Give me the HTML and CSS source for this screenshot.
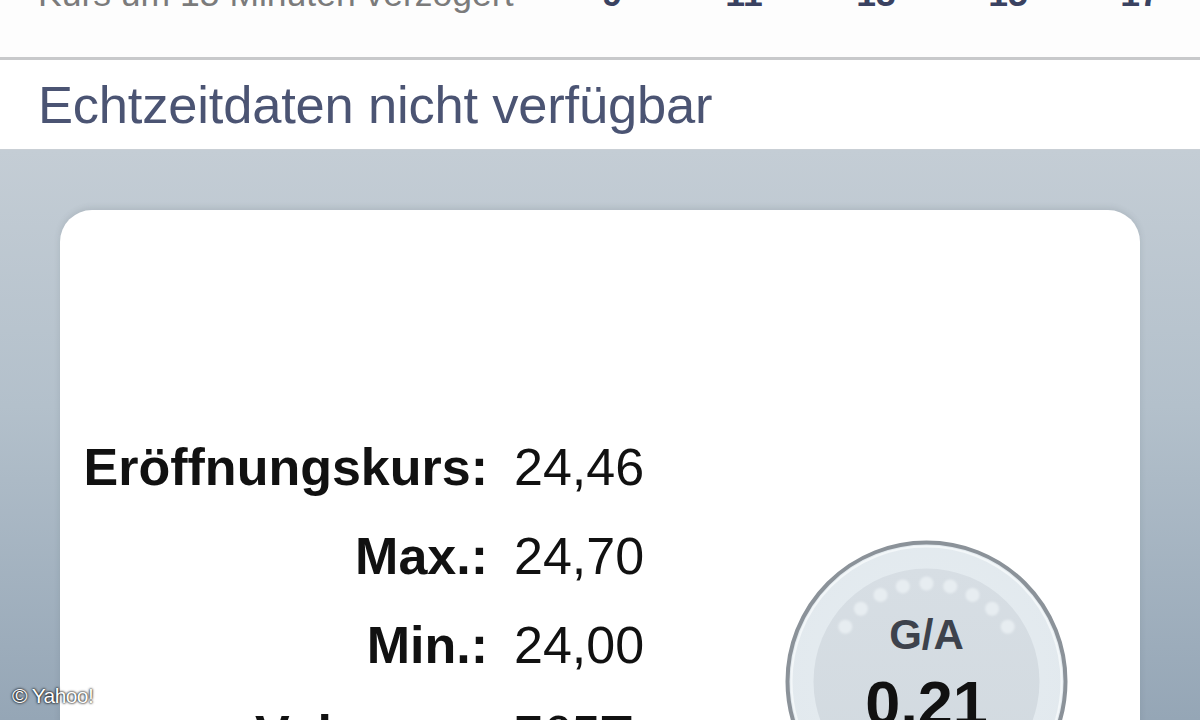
FILE: index.html
```html
<!DOCTYPE html>
<html lang="de">
<head>
<meta charset="utf-8">
<title>Kurs</title>
<link rel="stylesheet" href="styles.css">
</head>
<body>
<div class="screen">
  <div class="status">
    <div class="status-row">
      <span class="status-label">Kurs um 15 Minuten verzögert</span>
      <div class="axis">
        <span>9</span><span>11</span><span>13</span><span>15</span><span>17</span>
      </div>
    </div>
  </div>
  <div class="sep"></div>
  <div class="notice">Echtzeitdaten nicht verfügbar</div>
  <div class="panel">
    <div class="card">
      <div class="stats">
        <span class="label">Eröffnungskurs:</span><span class="value">24,46</span>
        <span class="label">Max.:</span><span class="value">24,70</span>
        <span class="label">Min.:</span><span class="value">24,00</span>
        <span class="label">Volumen:</span><span class="value">765T</span>
      </div>
      <div class="gauge">
        <svg class="gauge-bg" viewBox="0 0 283 283" width="283" height="283">
          <defs>
            <radialGradient id="ring" cx="50%" cy="45%" r="55%">
              <stop offset="0" stop-color="#e6edf1"/>
              <stop offset="1" stop-color="#e2e9ee"/>
            </radialGradient>
            <linearGradient id="inner" x1="0" y1="0" x2="0" y2="1">
              <stop offset="0" stop-color="#d7dee4"/>
              <stop offset="1" stop-color="#d1d9df"/>
            </linearGradient>
            <filter id="soft"><feGaussianBlur stdDeviation="1.2"/></filter>
          </defs>
          <circle cx="141.5" cy="141.5" r="139" fill="url(#ring)" stroke="#8b9299" stroke-width="4"/>
          <circle cx="141.5" cy="141.5" r="135" fill="none" stroke="#f3f7f9" stroke-width="2"/>
          <circle cx="141.5" cy="141.5" r="113" fill="url(#inner)"/>
          <g fill="#e7edf1" filter="url(#soft)">
            <circle cx="60.3" cy="86.7" r="7"/>
            <circle cx="75.9" cy="68.7" r="7"/>
            <circle cx="95.5" cy="55" r="7"/>
            <circle cx="117.8" cy="46.4" r="7"/>
            <circle cx="141.5" cy="43.5" r="7"/>
            <circle cx="165.2" cy="46.4" r="7"/>
            <circle cx="187.5" cy="55" r="7"/>
            <circle cx="207.1" cy="68.7" r="7"/>
            <circle cx="222.7" cy="86.7" r="7"/>
          </g>
        </svg>
        <span class="gauge-title">G/A</span>
        <span class="gauge-value">0,21</span>
      </div>
    </div>
  </div>
  <div class="copyright">© Yahoo!</div>
</div>
</body>
</html>
```
FILE: styles.css
```css
html, body {
  margin: 0;
  padding: 0;
  background: #ffffff;
}
body {
  font-family: "Liberation Sans", Arial, sans-serif;
  overflow: hidden;
}
.screen {
  position: relative;
  width: 1200px;
  height: 720px;
  overflow: hidden;
  display: flex;
  flex-direction: column;
}
.status {
  height: 57px;
  overflow: hidden;
  background: #fdfdfd;
}
.status-row {
  display: flex;
  align-items: baseline;
  margin-top: -26px;
  padding-left: 38px;
  font-size: 35.5px;
  line-height: 40px;
}
.status-label {
  width: 508px;
  color: #7b7b7b;
  flex: none;
}
.axis {
  display: flex;
}
.axis span {
  width: 132px;
  text-align: center;
  font-weight: bold;
  color: #3a4261;
}
.sep {
  height: 3px;
  background: #c8c9cb;
  flex: none;
}
.notice {
  height: 90px;
  flex: none;
  padding-left: 38px;
  font-size: 52.5px;
  line-height: 90px;
  color: #4b5473;
  background: #ffffff;
  border-bottom: 1px solid #c9cfd5;
  box-sizing: border-box;
  letter-spacing: -0.2px;
}
.panel {
  flex: 1;
  background: linear-gradient(to bottom, #c4cdd5 0%, #b3c0cb 45%, #95a6b6 100%);
  padding: 60px 60px 0;
  overflow: hidden;
}
.card {
  background: #ffffff;
  border-radius: 32px 32px 0 0;
  height: 700px;
  box-shadow: 0 -2px 6px rgba(60, 70, 80, 0.14);
  display: flex;
  align-items: flex-start;
  padding: 213px 0 0 18px;
  box-sizing: border-box;
}
.stats {
  display: grid;
  grid-template-columns: 410px 140px;
  column-gap: 26px;
  font-size: 52px;
  line-height: 89px;
  color: #111111;
}
.label {
  text-align: right;
  font-weight: bold;
}
.value {
  text-align: left;
}
.gauge {
  position: relative;
  width: 283px;
  height: 283px;
  margin-left: 131px;
  margin-top: 117px;
  display: flex;
  flex-direction: column;
  align-items: center;
  flex: none;
}
.gauge-bg {
  position: absolute;
  left: 0;
  top: 0;
}
.gauge-title {
  position: relative;
  margin-top: 74px;
  font-size: 42px;
  line-height: 42px;
  font-weight: bold;
  color: #3d424c;
}
.gauge-value {
  position: relative;
  margin-top: 16px;
  font-size: 63px;
  line-height: 63px;
  font-weight: bold;
  color: #111111;
}
.copyright {
  position: absolute;
  left: 12px;
  bottom: 12px;
  font-size: 21px;
  line-height: 24px;
  color: #ffffff;
  letter-spacing: -0.6px;
  text-shadow: 0 0 2px #000, 0 0 3px rgba(0,0,0,0.8);
}
```
